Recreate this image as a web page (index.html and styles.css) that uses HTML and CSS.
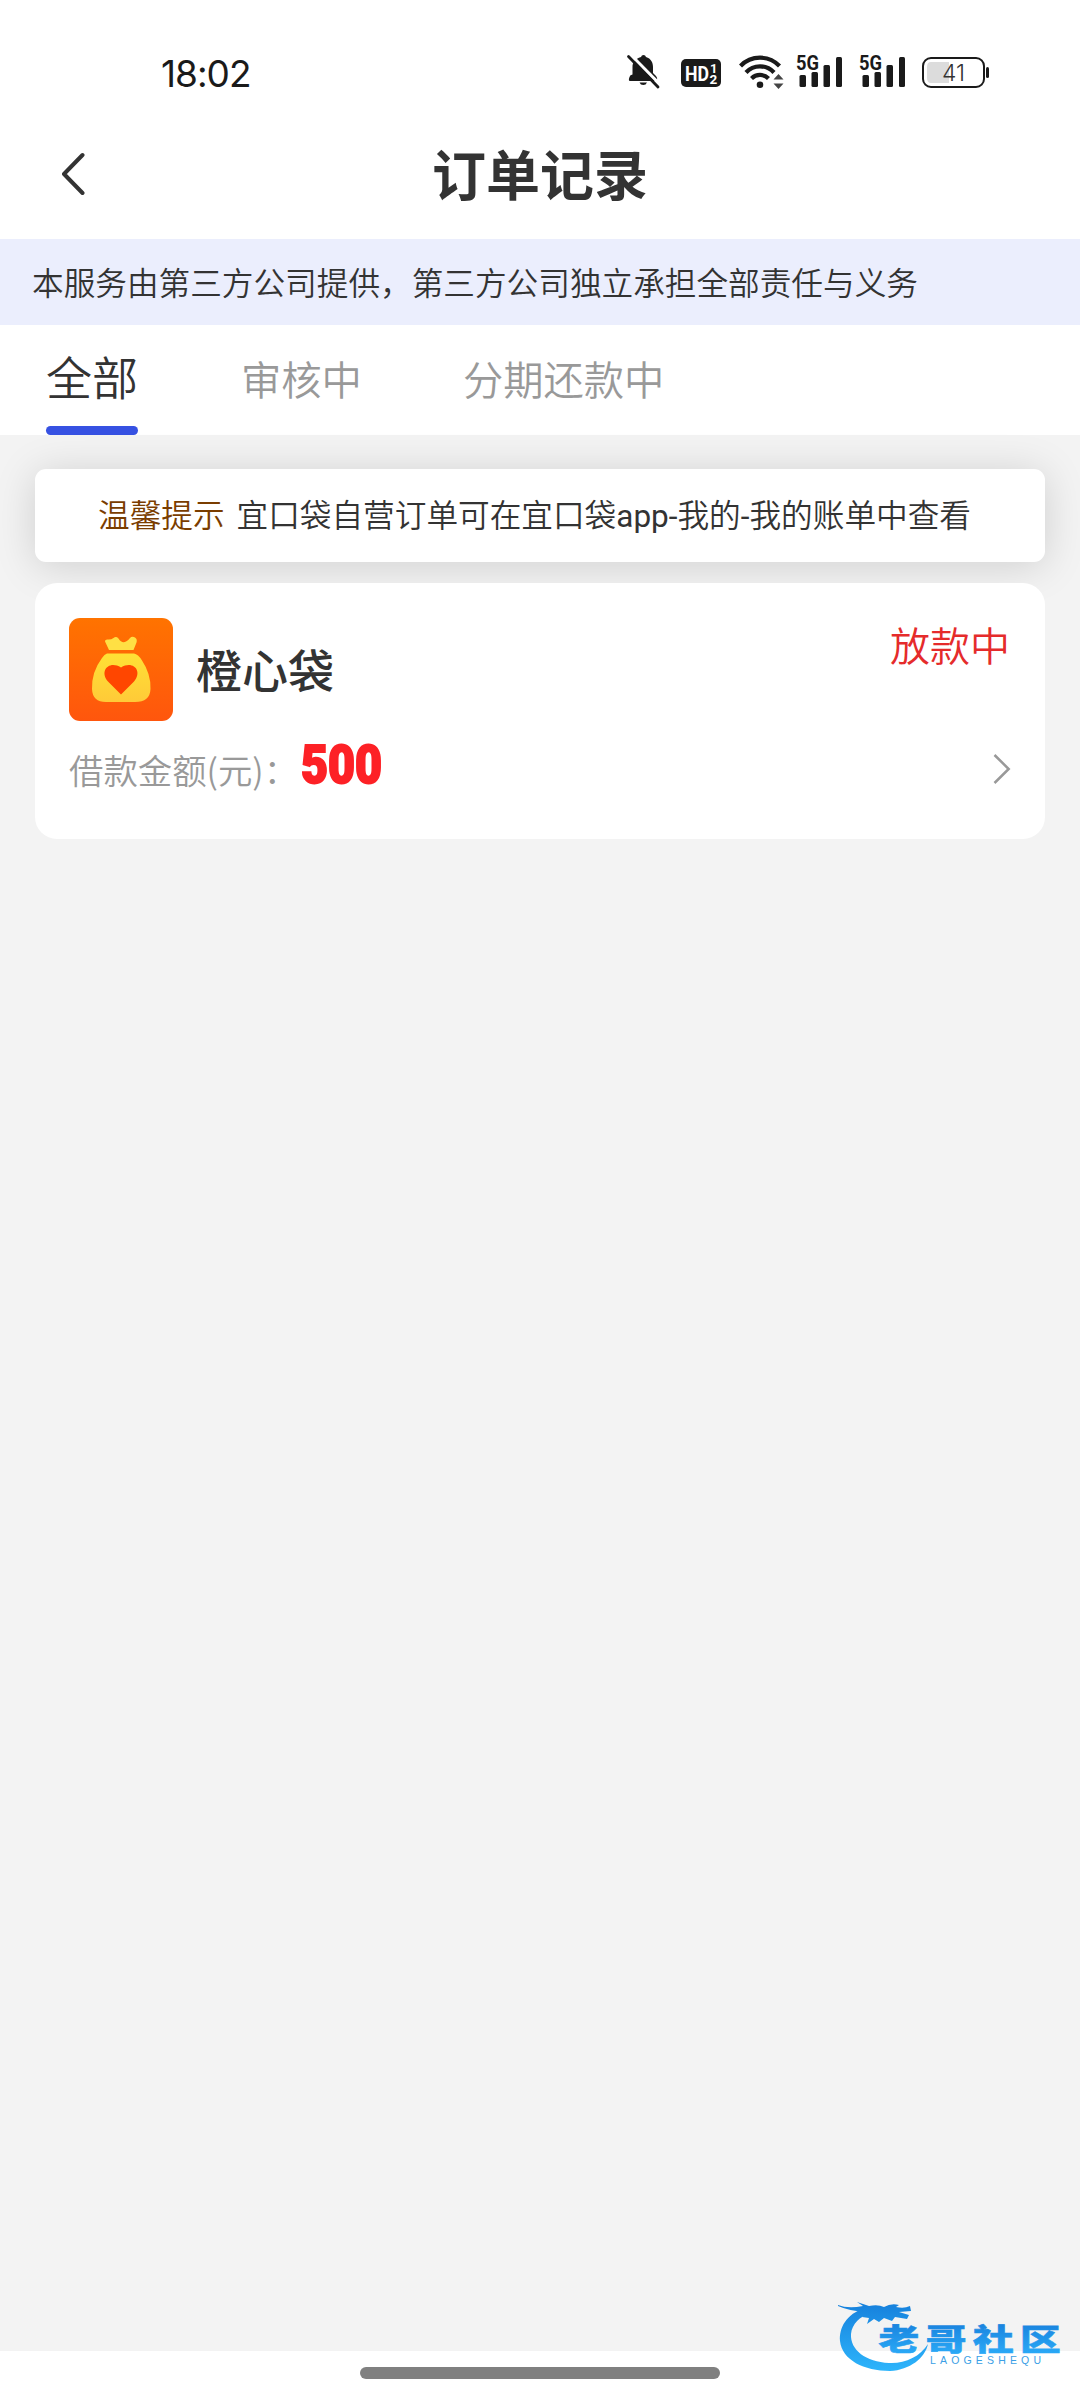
FILE: index.html
```html
<!DOCTYPE html>
<html lang="zh-CN">
<head>
<meta charset="utf-8">
<title>订单记录</title>
<link rel="stylesheet" href="styles.css">
</head>
<body>
<div class="screen">
  <div class="status-bar">
    <div class="clock">18:02</div>
    <div class="status-icons">
      <svg class="ic-bell" width="34" height="36" viewBox="0 0 34 36">
        <path d="M15 3 a2.6 2.6 0 0 1 5 0 C25 4.500 27 8.500 27 13 V19 L30 22 Q32 24 31 27 H4 Q2 27 3.500 23 Q4 20.500 6.500 20.500 V13 C6.500 8.500 9 5 15 3 Z" fill="#1a1a1a"/>
        <path d="M13.500 28.500 H21 Q20 31 17.300 31 Q14.500 31 13.500 28.500 Z" fill="#1a1a1a"/>
        <path d="M5 1 L35 31.500" stroke="#fff" stroke-width="3"/>
        <path d="M2.500 2.500 L32 33" stroke="#1a1a1a" stroke-width="2.800" stroke-linecap="round"/>
      </svg>
      <svg class="ic-hd" width="40" height="28" viewBox="0 0 40 28">
        <rect width="40" height="28" rx="5" fill="#1a1a1a"/>
        <g fill="#fff" font-family="Roboto, sans-serif" font-weight="700">
          <text x="4" y="21.500" font-size="21" textLength="24" lengthAdjust="spacingAndGlyphs">HD</text>
          <text x="29" y="13.500" font-size="13">1</text>
          <text x="28.500" y="25" font-size="13.500">2</text>
        </g>
      </svg>
      <svg class="ic-wifi" width="46" height="36" viewBox="0 0 46 36">
        <g fill="none" stroke="#1a1a1a" stroke-width="4.200">
          <path d="M1.500 12 A27 27 0 0 1 40.500 12"/>
          <path d="M7 18.500 A19 19 0 0 1 35 18.500"/>
          <path d="M12.500 24.500 A12 12 0 0 1 29.500 24.500"/>
        </g>
        <circle cx="21" cy="30.800" r="3.300" fill="#1a1a1a"/>
        <path d="M34.500 25.500 L39.500 20 L44.500 25.500 Z M34.500 29.500 L39.500 35 L44.500 29.500 Z" fill="#444"/>
      </svg>
      <svg class="ic-5g" width="47" height="38" viewBox="0 -4 47 38">
        <text x="0" y="16" font-family="Roboto, sans-serif" font-size="21" font-weight="700" textLength="23" lengthAdjust="spacingAndGlyphs" fill="#1a1a1a">5G</text>
        <g fill="#1a1a1a"><rect x="3.500" y="21" width="6.500" height="12" rx="1.500"/><rect x="15.500" y="18" width="6.500" height="15" rx="1.500"/><rect x="27.500" y="11" width="6.500" height="22" rx="1.500"/><rect x="40" y="3" width="6" height="30" rx="1.500"/></g>
      </svg>
      <svg class="ic-5g" width="47" height="38" viewBox="0 -4 47 38">
        <text x="0" y="16" font-family="Roboto, sans-serif" font-size="21" font-weight="700" textLength="23" lengthAdjust="spacingAndGlyphs" fill="#1a1a1a">5G</text>
        <g fill="#1a1a1a"><rect x="3.500" y="21" width="6.500" height="12" rx="1.500"/><rect x="15.500" y="18" width="6.500" height="15" rx="1.500"/><rect x="27.500" y="11" width="6.500" height="22" rx="1.500"/><rect x="40" y="3" width="6" height="30" rx="1.500"/></g>
      </svg>
      <svg class="ic-battery" width="68" height="31" viewBox="0 0 68 31">
        <path d="M9 5 H27 V26 H9 Q5 26 5 21 V10 Q5 5 9 5 Z" fill="#dcdcdc"/>
        <rect x="1" y="1" width="61" height="29" rx="8" fill="none" stroke="#1a1a1a" stroke-width="2"/>
        <rect x="64" y="10" width="3" height="11" rx="1.500" fill="#1a1a1a"/>
        <text x="20" y="24" font-family="Inter, sans-serif" font-size="22.500" textLength="23" lengthAdjust="spacingAndGlyphs" fill="#333">41</text>
      </svg>
    </div>
  </div>

  <header class="nav">
    <svg class="back" width="24" height="44" viewBox="0 0 24 44"><path d="M21.500 3 L3 22 L21.500 41" fill="none" stroke="#333" stroke-width="4" stroke-linecap="round" stroke-linejoin="round"/></svg>
    <h1 class="title">订单记录</h1>
  </header>

  <div class="notice">本服务由第三方公司提供，第三方公司独立承担全部责任与义务</div>

  <nav class="tabs">
    <div class="tab tab-active">全部<span class="tab-line"></span></div>
    <div class="tab">审核中</div>
    <div class="tab">分期还款中</div>
  </nav>

  <main class="content">
    <div class="tip"><span class="tip-label">温馨提示</span><span class="tip-text">宜口袋自营订单可在宜口袋<span class="latin">app-</span>我的<span class="latin">-</span>我的账单中查看</span></div>

    <section class="order">
      <div class="order-head">
        <svg class="logo" width="104" height="104" viewBox="0 0 104 104">
          <defs>
            <linearGradient id="orange" x1="0" y1="0" x2="0" y2="1"><stop offset="0" stop-color="#ff7300"/><stop offset="1" stop-color="#ff560d"/></linearGradient>
            <linearGradient id="gold" x1="0" y1="0" x2="0" y2="1"><stop offset="0" stop-color="#ffe135"/><stop offset="1" stop-color="#ffca38"/></linearGradient>
          </defs>
          <rect width="104" height="103" rx="11" fill="url(#orange)"/>
          <path d="M40 32 L36.500 24.500 Q35 22 38 21.500 Q42 22 44.500 20 Q47 18 49.500 20.500 Q53 26 57 23.500 Q59.500 22 61 20 Q63 18 66 19.500 Q68.500 21 67.500 24.500 L64.500 32 Z" fill="#ffe044"/>
          <path d="M38 35.500 H65 Q69 36 73 42.500 Q82 56 81.500 71 Q81 84 66 84 H37 Q23.500 84 23 71 Q22.500 54 33 40 Q35.500 36 38 35.500 Z" fill="url(#gold)"/>
          <path d="M52 76.500 L39 63.500 C30 53 40 42 52 49.500 C64 42 74 53 65 63.500 Z" fill="#ff4600"/>
        </svg>
        <h2 class="order-name">橙心袋</h2>
        <div class="order-state">放款中</div>
      </div>
      <div class="order-body">
        <span class="amount-label">借款金额(元)：</span>
        <span class="amount">500</span>
        <svg class="more" width="18" height="30" viewBox="0 0 18 30"><path d="M1.500 1 L15.700 15 L1.500 29" fill="none" stroke="#999" stroke-width="2.500"/></svg>
      </div>
    </section>
  </main>

  <footer class="gesture"><div class="gesture-bar"></div></footer>

  <svg class="watermark" width="260" height="120" viewBox="0 0 260 120">
    <defs>
      <linearGradient id="blue" gradientUnits="userSpaceOnUse" x1="0" y1="22" x2="0" y2="90"><stop offset="0" stop-color="#1680dc"/><stop offset="1" stop-color="#2db4fb"/></linearGradient>
      <linearGradient id="word" x1="0" y1="0" x2="0" y2="1"><stop offset=".1" stop-color="#177fdc"/><stop offset="1" stop-color="#2daffa"/></linearGradient>
    </defs>
    <path d="M45 28 C26 34 19 48 20 61 C22 80 44 91 70 91 C90 90 105 78 108 64 C100 77 84 84 69 83 C46 82 30 70 31 54 C32 44 40 36 50 34 Z" fill="url(#blue)"/>
    <path d="M18 25 Q28 29 43 26 L37 22 L49 26 Q58 24 64 27 Q71 23 79 25 L76 27 Q84 29 90 26 L91 31 L79 32 L89 35 L87 39 L75 37 L72 41 L64 38 L59 42 L54 39 L47 44 L49 38 L42 37 L46 32 Q29 31 18 26 Z" fill="url(#blue)"/>
    <g transform="translate(58.500 70) scale(1.380 1)"><text class="mark-name" x="0 34.200 68.400 102.600" y="0" fill="url(#word)" stroke="url(#word)">老哥社区</text></g>
    <text class="mark-latin" x="110" y="83.500" textLength="111">LAOGESHEQU</text>
  </svg>
</div>
</body>
</html>
```
FILE: styles.css
```css
* { box-sizing: border-box; }
body {
  margin: 0;
  background: #fff;
  color: #333;
  font-family: "Noto Sans CJK SC", sans-serif;
  font-weight: 350;
}
.screen {
  position: relative;
  display: flex;
  flex-direction: column;
  width: 1080px;
  height: 2400px;
  overflow: hidden;
  white-space: nowrap;
}
svg { display: block; flex: none; }

.status-bar {
  display: flex;
  justify-content: space-between;
  height: 110px;
  padding: 54px 90px 0 161px;
}
.clock {
  font: 400 37px/39px Inter, sans-serif;
  letter-spacing: -1px;
  color: #1a1a1a;
}
.status-icons { display: flex; align-items: flex-start; }
.ic-bell { margin-right: 21px; }
.ic-hd { margin: 5px 18px 0 0; }
.ic-wifi { margin-right: 11px; }
.ic-5g { margin: -4px 16px 0 0; }
.ic-battery { margin-top: 3px; }

.nav {
  display: grid;
  grid-template-columns: 1fr auto 1fr;
  align-items: center;
  height: 129px;
  padding: 0 61px 2px;
}
.title {
  margin: 0;
  padding-bottom: 2px;
  font-size: 54px;
  line-height: 80px;
  font-weight: 700;
}

.notice {
  height: 86px;
  padding-left: 32px;
  background: #ebeefd;
  font-size: 31.650px;
  line-height: 84px;
}

.tabs {
  display: flex;
  height: 110px;
  padding-left: 46px;
}
.tab {
  display: flex;
  justify-content: center;
  height: 110px;
  margin-right: 101px;
  font-size: 40.300px;
  line-height: 106px;
  color: #999;
}
.tab-active {
  flex-direction: column;
  justify-content: space-between;
  margin-right: 103px;
  font-size: 46px;
  line-height: 101px;
  color: #333;
}
.tab-line {
  flex: none;
  height: 9px;
  border-radius: 4.500px;
  background: #3651e2;
}

.content {
  flex: 1;
  padding: 34px 35px 0;
  background: #f3f3f3;
}
.tip {
  display: flex;
  gap: 12px;
  height: 93px;
  padding-left: 63px;
  border-radius: 11px;
  background: #fff;
  box-shadow: 0 4px 42px rgba(0, 0, 0, .15);
  font-size: 31.650px;
  line-height: 88px;
}
.tip-label { color: #7a3d00; }
.latin { font-family: Roboto, sans-serif; font-weight: 400; font-size: 31.500px; }

.order {
  position: relative;
  height: 256px;
  margin-top: 21px;
  padding: 35px 34px 0;
  border-radius: 22px;
  background: #fff;
}
.order-head { display: flex; height: 104px; }
.order-name {
  margin: 0 0 0 23px;
  font-size: 46px;
  line-height: 101px;
  font-weight: 500;
}
.order-state {
  margin-left: auto;
  padding-right: 1px;
  font-size: 40px;
  line-height: 53px;
  color: #e52b2b;
}
.order-body { display: flex; align-items: center; height: 94px; }
.amount-label { margin-top: -1px; font-size: 34.400px; color: #999; }
.amount {
  margin: -9px 0 0 3px;
  font: 900 53px/60px Roboto, sans-serif;
  transform: scaleX(.88);
  transform-origin: left;
  -webkit-text-stroke: 2px #fd2126;
  color: #fd2126;
}
.more { margin-left: auto; }

.gesture {
  display: flex;
  justify-content: center;
  height: 49px;
  padding-top: 16px;
}
.gesture-bar {
  width: 360px;
  height: 12px;
  border-radius: 6px;
  background: #808080;
}

.watermark { position: absolute; left: 820px; top: 2280px; }
.mark-name { font: 900 29.500px "Noto Sans CJK SC", sans-serif; stroke-width: .6px; }
.mark-latin { font: 400 10.500px "Liberation Sans", sans-serif; fill: #3b9fe6; }
```
